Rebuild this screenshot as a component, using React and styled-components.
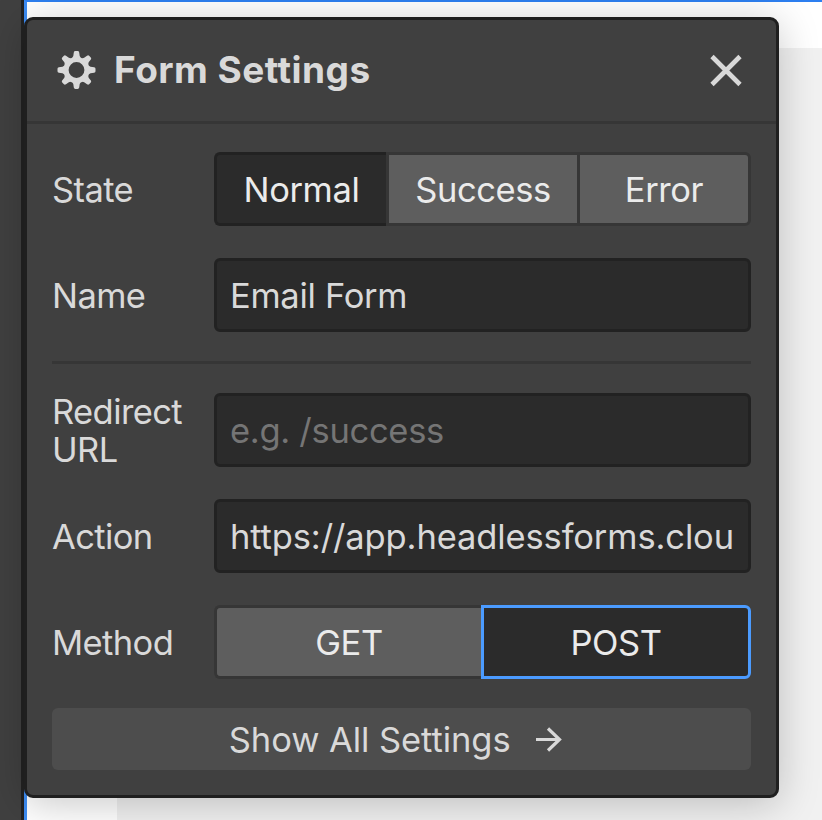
import styled, { createGlobalStyle } from "styled-components";

const states = [
  { label: "Normal", width: 172, active: true },
  { label: "Success", width: 191 },
  { label: "Error", width: 174 },
];

const methods = [
  { label: "GET", width: 267 },
  { label: "POST", width: 270, focused: true },
];

const teeth = [0, 45, 90, 135, 180, 225, 270, 315];

function GearIcon() {
  return (
    <svg width="39" height="39" viewBox="-19.5 -20 39 39" fill="#d9d9d9" overflow="visible">
      <circle r="10.5" fill="none" stroke="#d9d9d9" strokeWidth="5.2" />
      {teeth.map((angle) => (
        <path
          key={angle}
          transform={`rotate(${angle})`}
          d="M-4.4 -12 L-3.2 -14 L-2.7 -17.6 Q-2.4 -19 -1.2 -19 H1.2 Q2.4 -19 2.7 -17.6 L3.2 -14 L4.4 -12 Z"
        />
      ))}
    </svg>
  );
}

function CloseIcon() {
  return (
    <svg width="34" height="34" viewBox="0 0 34 34" fill="none">
      <path d="M3 3.5L31 31.5M31 3.5L3 31.5" stroke="#d9d9d9" strokeWidth="4.6" />
    </svg>
  );
}

function ArrowIcon() {
  return (
    <svg width="28" height="26" viewBox="0 0 28 26" fill="none">
      <path d="M1 13.5H25M13 2.5L24.5 13.5L13 24.5" stroke="#d9d9d9" strokeWidth="3.2" />
    </svg>
  );
}

function App() {
  return (
    <>
      <GlobalStyle />
      <Page>
        <Sidebar />
        <Canvas>
          <Artboard />
        </Canvas>
        <Panel>
          <Header>
            <GearIcon />
            <Title>Form Settings</Title>
            <CloseButton aria-label="Close">
              <CloseIcon />
            </CloseButton>
          </Header>
          <Body>
            <Row>
              <Label>State</Label>
              <Group>
                {states.map((item) => (
                  <Segment key={item.label} $width={item.width} $active={item.active}>
                    {item.label}
                  </Segment>
                ))}
              </Group>
            </Row>
            <Row>
              <Label>Name</Label>
              <Field>Email Form</Field>
            </Row>
            <Divider />
            <Row>
              <Label>Redirect URL</Label>
              <Field $placeholder>e.g. /success</Field>
            </Row>
            <Row>
              <Label>Action</Label>
              <Field $spacing={-0.12}>https://app.headlessforms.clou</Field>
            </Row>
            <Row>
              <Label>Method</Label>
              <Group>
                {methods.map((item) => (
                  <Segment key={item.label} $width={item.width} $focused={item.focused}>
                    {item.label}
                  </Segment>
                ))}
              </Group>
            </Row>
            <ShowAll>
              Show All Settings
              <ArrowIcon />
            </ShowAll>
          </Body>
        </Panel>
      </Page>
    </>
  );
}

const GlobalStyle = createGlobalStyle`
  * {
    box-sizing: border-box;
  }
  body {
    margin: 0;
    overflow: hidden;
    font-family: Inter, "Liberation Sans", sans-serif;
    font-variant-ligatures: none;
  }
`;
const Page = styled.div`
  position: relative;
  display: flex;
  width: 822px;
  height: 820px;
  background: #fff;
`;
const Sidebar = styled.div`
  width: 24px;
  background: #404040;
  border-right: 3px solid #222;
`;
const Canvas = styled.div`
  flex: 1;
  display: flex;
  padding: 46px 0 0 90px;
  border-top: 2px solid #2d7ff0;
  border-left: 3px solid #3d8df5;
`;
const Artboard = styled.div`
  flex: 1;
  background: #f1f1f1;
`;
const Panel = styled.div`
  position: absolute;
  left: 24px;
  top: 17px;
  width: 755.4px;
  height: 781px;
  background: #404040;
  border: 3px solid #1f1f1f;
  border-radius: 9px;
  box-shadow: 0 6px 40px rgba(0, 0, 0, 0.22);
  color: #d9d9d9;
  font-size: 34.5px;
`;
const Header = styled.div`
  display: flex;
  align-items: center;
  height: 104px;
  padding: 0 33px 2px 30px;
  border-bottom: 3px solid #363636;
`;
const Title = styled.h2`
  flex: 1;
  margin: 0 0 0 18px;
  font-size: 37px;
  font-weight: 700;
  line-height: 44px;
  letter-spacing: 0.48px;
`;
const CloseButton = styled.button`
  display: flex;
  padding: 0;
  border: none;
  background: none;
`;
const Body = styled.div`
  display: flex;
  flex-direction: column;
  gap: 32px;
  padding: 28px 25px 0;
`;
const Row = styled.div`
  display: flex;
  align-items: center;
  height: 74px;
`;
const Label = styled.div`
  width: 162px;
  padding: 2px 20px 0 0;
  line-height: 38px;
  letter-spacing: -0.6px;
`;
const Field = styled.div`
  flex: 1;
  height: 74px;
  padding: 0 13px;
  line-height: 70px;
  letter-spacing: ${(props) => props.$spacing ?? -0.3}px;
  white-space: nowrap;
  overflow: hidden;
  background: #2b2b2b;
  border: 3px solid #222;
  border-radius: 6px;
  color: ${(props) => (props.$placeholder ? "#757575" : "#d9d9d9")};
`;
const Divider = styled.div`
  height: 3px;
  margin: -3px 0;
  background: #363636;
`;
const Group = styled.div`
  display: flex;
  flex: 1;
  height: 74px;
`;
const Segment = styled.button`
  width: ${(props) => props.$width}px;
  padding: 0;
  font: inherit;
  letter-spacing: -0.4px;
  color: #ebebeb;
  background: ${(props) => (props.$active || props.$focused ? "#2b2b2b" : "#5e5e5e")};
  border: 3px solid
    ${(props) => (props.$focused ? "#4b9bff" : props.$active ? "#222" : "#363636")};
  border-right-width: 0;
  &:first-child {
    border-radius: 6px 0 0 6px;
  }
  &:last-child {
    border-right-width: 3px;
    border-radius: 0 6px 6px 0;
  }
`;
const ShowAll = styled.button`
  display: flex;
  align-items: center;
  justify-content: center;
  gap: 24px;
  height: 62px;
  margin-top: -3px;
  padding: 0 12px 0 0;
  border: none;
  border-radius: 6px;
  background: #4d4d4d;
  font: inherit;
  letter-spacing: -0.06px;
  color: #d9d9d9;
`;

export default App;
